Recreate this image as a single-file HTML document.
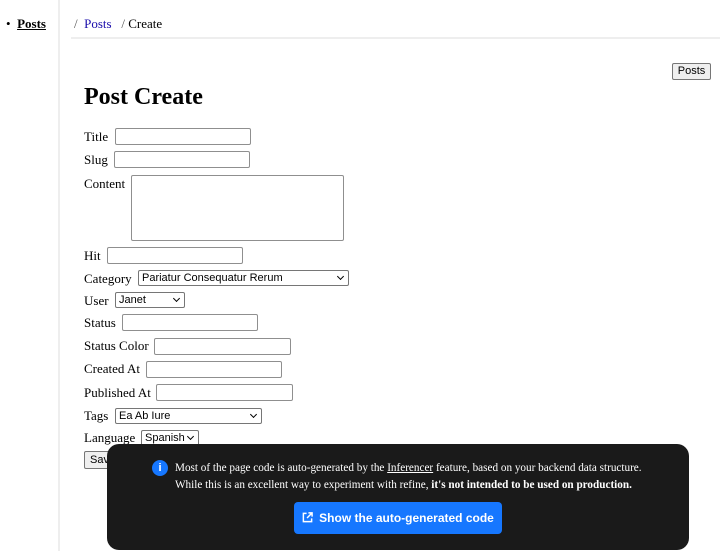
<!DOCTYPE html>
<html><head><style>
body{margin:0;width:720px;height:551px;overflow:hidden;background:#fff;font-family:"Liberation Serif",serif;font-size:13px;color:#000;position:relative}
.a{position:absolute;white-space:nowrap}
.in{position:absolute;border:1px solid #8f8f8f;border-radius:2px;box-sizing:border-box;background:#fff;height:17px}
.sel{position:absolute;border:1px solid #767676;border-radius:2px;box-sizing:border-box;background:#fff;height:16px;font-family:"Liberation Sans",sans-serif;font-size:11px;line-height:14px;padding-left:3px}
.sel:after{content:"";position:absolute;right:5px;top:3px;width:4px;height:4px;border-right:1.5px solid #000;border-bottom:1.5px solid #000;transform:rotate(45deg)}
.lbl{position:absolute;left:84px}
</style></head><body>
<div class="a" style="left:58px;top:0;width:2px;height:551px;background:#eee"></div>
<div class="a" style="left:6px;top:16px;font-size:13px">•&nbsp; <b style="text-decoration:underline">Posts</b></div>
<div class="a" style="left:74px;top:16px;color:#555">/&nbsp; <span style="color:#1a0dab">Posts</span> &nbsp;&nbsp;/ <span style="color:#000">Create</span></div>
<div class="a" style="left:71px;top:37px;width:649px;height:2px;background:#eee"></div>
<div class="a" style="left:672px;top:63px;width:39px;height:17px;border:1px solid #767676;border-radius:2px;box-sizing:border-box;background:#efefef;font-family:'Liberation Sans',sans-serif;font-size:11px;text-align:center;line-height:15px">Posts</div>
<div class="a" style="left:84px;top:84px;font-size:24px;font-weight:bold">Post Create</div>

<div class="lbl" style="top:129px">Title</div><div class="in" style="left:115px;top:128px;width:136px"></div>
<div class="lbl" style="top:152px">Slug</div><div class="in" style="left:114px;top:151px;width:136px"></div>
<div class="lbl" style="top:176px">Content</div><div class="in" style="left:131px;top:175px;width:213px;height:66px"></div>
<div class="lbl" style="top:248px">Hit</div><div class="in" style="left:107px;top:247px;width:136px"></div>
<div class="lbl" style="top:271px">Category</div><div class="sel" style="left:138px;top:270px;width:211px">Pariatur Consequatur Rerum</div>
<div class="lbl" style="top:293px">User</div><div class="sel" style="left:115px;top:292px;width:70px">Janet</div>
<div class="lbl" style="top:315px">Status</div><div class="in" style="left:122px;top:314px;width:136px"></div>
<div class="lbl" style="top:338px">Status Color</div><div class="in" style="left:154px;top:338px;width:137px"></div>
<div class="lbl" style="top:361px">Created At</div><div class="in" style="left:146px;top:361px;width:136px"></div>
<div class="lbl" style="top:385px">Published At</div><div class="in" style="left:156px;top:384px;width:137px"></div>
<div class="lbl" style="top:408px">Tags</div><div class="sel" style="left:115px;top:408px;width:147px">Ea Ab Iure</div>
<div class="lbl" style="top:430px">Language</div><div class="sel" style="left:141px;top:430px;width:58px">Spanish</div>
<div class="a" style="left:84px;top:451px;width:40px;height:18px;border:1px solid #767676;border-radius:2px;box-sizing:border-box;background:#efefef;font-family:'Liberation Sans',sans-serif;font-size:11px;padding-left:5px;line-height:16px">Save</div>

<div class="a" style="left:107px;top:444px;width:582px;height:106px;background:#1a1a1a;border-radius:12px"></div>
<div class="a" style="left:152px;top:460px;width:16px;height:16px;border-radius:50%;background:#1677ff;color:#fff;font-family:'Liberation Sans',sans-serif;font-weight:bold;font-size:11px;text-align:center;line-height:16px">i</div>
<div class="a" style="left:175px;top:460px;color:#fff;font-size:11.2px;line-height:17px">Most of the page code is auto-generated by the <u>Inferencer</u> feature, based on your backend data structure.<br>While this is an excellent way to experiment with refine, <b>it's not intended to be used on production.</b></div>
<div class="a" style="left:294px;top:502px;width:208px;height:32px;background:#1677ff;border-radius:4px;color:#fff;font-family:'Liberation Sans',sans-serif;font-weight:bold;font-size:12px;line-height:32px;text-align:center">
<svg width="11" height="11" viewBox="0 0 12 12" style="vertical-align:-1px;margin-right:6px" fill="none" stroke="#fff" stroke-width="1.6"><path d="M5 1.5H1.5v9h9V7"/><path d="M7 1h4v4M11 1L5.5 6.5"/></svg>Show the auto-generated code</div>
</body></html>
